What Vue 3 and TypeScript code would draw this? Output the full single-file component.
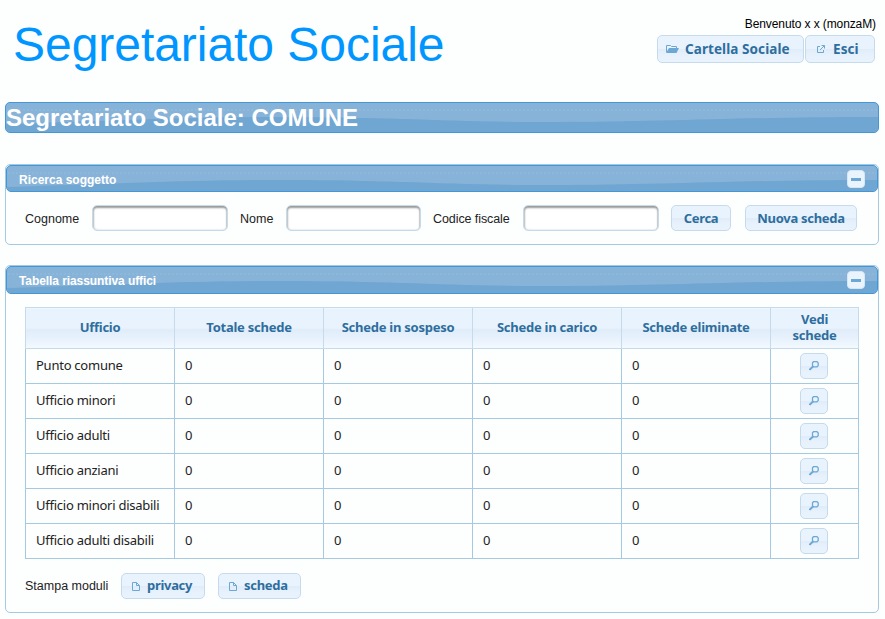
<script setup lang="ts">
interface Office {
  name: string
  counts: number[]
}

const columns: string[] = ['Ufficio', 'Totale schede', 'Schede in sospeso', 'Schede in carico', 'Schede eliminate', 'Vedi schede']

const offices: Office[] = [
  'Punto comune',
  'Ufficio minori',
  'Ufficio adulti',
  'Ufficio anziani',
  'Ufficio minori disabili',
  'Ufficio adulti disabili',
].map((name) => ({ name, counts: [0, 0, 0, 0] }))

const wave = 'M0 21C110 18 170 14 280 14C390 14 440 19 550 19C660 19 730 14 874 14V31H0Z'
</script>

<template>
  <div class="page">
    <header class="top">
      <div class="brand">Segretariato Sociale</div>
      <div class="account">
        <div class="welcome">Benvenuto x x (monzaM)</div>
        <div class="actions">
          <button class="btn folder-btn">
            <svg class="icon folder" viewBox="0 0 13 10">
              <path d="M.5 8V1.500h4l1 1h5V4" fill="none" stroke="#6da8d5" />
              <path d="M0 9 3 4h10l-2.500 5z" fill="#6da8d5" />
            </svg>
            <span>Cartella Sociale</span>
          </button>
          <button class="btn exit-btn">
            <svg class="icon" viewBox="0 0 10 10">
              <path d="M4 2.500H1.500v6h6V6M5.500 1.500h3v3M8.500 1.500 4 6" fill="none" stroke="#6da8d5" />
            </svg>
            <span>Esci</span>
          </button>
        </div>
      </div>
    </header>

    <h1 class="bar banner">
      <svg class="wave" viewBox="0 0 874 31" preserveAspectRatio="none"><path :d="wave" /></svg>
      <span>Segretariato Sociale: COMUNE</span>
    </h1>

    <section class="panel search">
      <div class="bar heading">
        <svg class="wave" viewBox="0 0 874 31" preserveAspectRatio="none"><path :d="wave" /></svg>
        <span>Ricerca soggetto</span>
        <i class="toggle"></i>
      </div>
      <form class="fields" @submit.prevent>
        <label class="l1" for="cognome">Cognome</label><input id="cognome" class="i1" type="text" />
        <label class="l2" for="nome">Nome</label><input id="nome" class="i2" type="text" />
        <label class="l3" for="codice">Codice fiscale</label><input id="codice" class="i3" type="text" />
        <button class="btn find-btn"><span>Cerca</span></button>
        <button class="btn new-btn"><span>Nuova scheda</span></button>
      </form>
    </section>

    <section class="panel summary">
      <div class="bar heading tall">
        <svg class="wave" viewBox="0 0 874 31" preserveAspectRatio="none"><path :d="wave" /></svg>
        <span>Tabella riassuntiva uffici</span>
        <i class="toggle"></i>
      </div>
      <table>
        <colgroup>
          <col v-for="n in 5" :key="n" class="wide" />
          <col class="narrow" />
        </colgroup>
        <thead>
          <tr>
            <th v-for="c in columns" :key="c">{{ c }}</th>
          </tr>
        </thead>
        <tbody>
          <tr v-for="o in offices" :key="o.name">
            <td>{{ o.name }}</td>
            <td v-for="(n, i) in o.counts" :key="i">{{ n }}</td>
            <td class="view">
              <button class="btn view-btn" aria-label="Vedi">
                <svg class="icon" viewBox="0 0 10 10">
                  <path d="M4.500 .7h3.500l1.200 1.200v2.700l-1.200 1.200H4.500L3.500 4.800V1.700z" fill="none" stroke="#6da8d5" stroke-width="1.300" />
                  <path d="M4 5.500 .6 8.800" stroke="#6da8d5" stroke-width="1.900" />
                </svg>
              </button>
            </td>
          </tr>
        </tbody>
      </table>
      <div class="forms">
        <span class="forms-label">Stampa moduli</span>
        <button v-for="f in ['privacy', 'scheda']" :key="f" class="btn doc-btn" :class="f">
          <svg class="icon doc" viewBox="0 0 8 10">
            <path d="M.5 1.500h4l3 3v5h-7zM4.500 1.500v3h3" fill="none" stroke="#6da8d5" />
          </svg>
          <span>{{ f }}</span>
        </button>
      </div>
    </section>
  </div>
</template>

<style>
body {
  background: #fdfefe;
}
</style>

<style scoped>
* {
  box-sizing: border-box;
}
.page {
  width: 885px;
  height: 619px;
  padding: 0 6px 0 5px;
  overflow: hidden;
  font: 12px 'Liberation Sans', Arial, sans-serif;
  color: #222;
}
.top {
  height: 102px;
  display: flex;
  justify-content: space-between;
}
.brand {
  padding: 17px 0 0 8px;
  font-size: 48px;
  line-height: 55px;
  letter-spacing: -0.04px;
  color: #0096ff;
  white-space: nowrap;
}
.account {
  padding: 16px 3px 0 0;
  display: flex;
  flex-direction: column;
  align-items: flex-end;
}
.welcome {
  height: 19px;
  line-height: 17px;
  letter-spacing: -0.1px;
  color: #000;
}
.actions {
  display: flex;
  gap: 1px;
  margin-right: 1px;
}
.btn {
  display: flex;
  align-items: center;
  justify-content: center;
  flex: none;
  height: 26px;
  padding: 0 0 1px;
  border: 1px solid #c5dbec;
  border-radius: 5px;
  background: linear-gradient(#e9f3fd 48%, #e0ecf9 52%, #e6f1fc 70%, #e9f3fd);
  color: #2e6e9e;
  font: bold 13px 'Noto Sans', 'Open Sans', sans-serif;
  letter-spacing: -0.3px;
  white-space: nowrap;
}
.icon {
  flex: none;
  width: 10px;
  height: 10px;
}
.icon.folder {
  width: 13px;
}
.icon.doc {
  width: 8px;
  margin-top: 2px;
}
.actions .btn {
  height: 28px;
  justify-content: flex-start;
  font-size: 13.5px;
  letter-spacing: 0.08px;
}
.folder-btn {
  width: 147px;
  padding-left: 8px;
  gap: 6px;
}
.exit-btn {
  width: 70px;
  padding-left: 10px;
  gap: 7px;
}
.bar {
  position: relative;
  margin: 0;
  overflow: hidden;
  border: 1px solid #4297d7;
  border-radius: 5px;
  background: radial-gradient(circle, #9bc2e1 0.5px, transparent 0.8px) 0 5px / 4px 4px repeat-x, #88b3d8;
  color: #fff;
  font-weight: bold;
}
.wave {
  position: absolute;
  top: 0;
  left: 0;
  width: 100%;
  height: 31px;
  fill: #70a6d2;
}
.bar span {
  position: relative;
}
.banner {
  height: 31px;
  font-size: 24px;
  line-height: 29px;
}
.panel {
  border: 1px solid #a6c9e2;
  border-radius: 5px;
}
.search {
  height: 81px;
  margin-top: 31px;
}
.summary {
  height: 348px;
  margin-top: 20px;
}
.heading {
  display: flex;
  align-items: center;
  justify-content: space-between;
  height: 27px;
  padding: 1px 12px 0;
}
.heading span {
  padding-top: 2px;
}
.heading.tall {
  height: 28px;
  padding-top: 0;
  letter-spacing: -0.08px;
}
.toggle {
  display: flex;
  position: relative;
  align-items: center;
  justify-content: center;
  width: 18px;
  height: 18px;
  border: 1px solid #d6e6f4;
  border-radius: 4px;
  background: #eaf4fd;
}
.toggle::before {
  content: '';
  width: 10px;
  height: 3px;
  background: #6da8d5;
}
.fields {
  display: flex;
  align-items: center;
  padding: 13px 0 0 19px;
}
.fields input {
  flex: none;
  height: 26px;
  border: 1px solid #c5dbec;
  border-radius: 5px;
  background: #fff;
  box-shadow: inset 0 2px 2px #999, inset 1px 0 2px #ccc, inset -1px 0 1px #ddd;
}
.fields label {
  padding-top: 1px;
  font-size: 12.5px;
  white-space: nowrap;
}
.l1 {
  width: 67px;
}
.l2 {
  width: 47px;
}
.l3 {
  width: 90px;
  letter-spacing: -0.08px;
}
.i1 {
  width: 136px;
  margin-right: 12px;
}
.i2 {
  width: 135px;
  margin: 0 12px 0 -1px;
}
.i3 {
  width: 136px;
  margin-right: 12px;
}
.find-btn {
  width: 60px;
  margin-right: 14px;
}
.new-btn {
  width: 112px;
}
table {
  width: 834px;
  margin: 13px 0 0 19px;
  border-collapse: collapse;
  table-layout: fixed;
  font: 13px 'Noto Sans', 'Open Sans', sans-serif;
  letter-spacing: -0.25px;
}
.wide {
  width: 149px;
}
.narrow {
  width: 88px;
}
th {
  height: 41px;
  padding: 0 10px 2px;
  border: 1px solid #c5dbec;
  background: linear-gradient(#e9f3fd 50%, #dfecf9 52%, #e6f1fc 72%, #f3f9fe);
  color: #2e6e9e;
  line-height: 16px;
  letter-spacing: -0.25px;
}
td {
  height: 35px;
  padding: 0 10px 2px;
  border: 1px solid #a6c9e2;
  line-height: 18px;
  white-space: nowrap;
}
.view {
  padding: 0;
}
.view-btn {
  width: 28px;
  margin: 0 0 0 29px;
}
.forms {
  display: flex;
  align-items: center;
  padding: 14px 0 0 19px;
}
.forms-label {
  width: 96px;
  font-size: 12.5px;
}
.doc-btn {
  gap: 7px;
  justify-content: flex-start;
  padding: 0 0 2px 10px;
}
.privacy {
  width: 84px;
  margin-right: 13px;
}
.scheda {
  width: 83px;
}
</style>
